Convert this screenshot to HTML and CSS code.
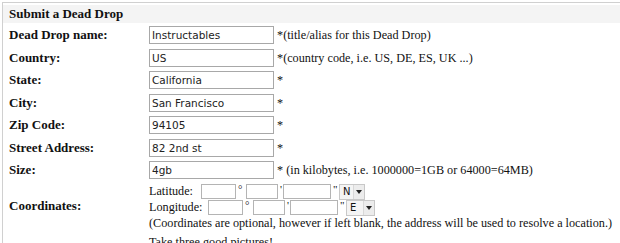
FILE: index.html
```html
<!DOCTYPE html>
<html>
<head>
<meta charset="utf-8">
<link rel="stylesheet" href="styles.css">
</head>
<body>
<div class="box">
  <div class="head">Submit a Dead Drop</div>
  <table class="form">
    <colgroup><col class="lcol"><col class="rcol"></colgroup>
    <tr><th>Dead Drop name:</th><td><input class="txt" value="Instructables"> <span class="note">*(title/alias for this Dead Drop)</span></td></tr>
    <tr><th>Country:</th><td><input class="txt" value="US"> <span class="note">*(country code, i.e. US, DE, ES, UK ...)</span></td></tr>
    <tr><th>State:</th><td><input class="txt" value="California"> <span class="note">*</span></td></tr>
    <tr><th>City:</th><td><input class="txt" value="San Francisco"> <span class="note">*</span></td></tr>
    <tr><th>Zip Code:</th><td><input class="txt" value="94105"> <span class="note">*</span></td></tr>
    <tr><th>Street Address:</th><td><input class="txt" value="82 2nd st"> <span class="note">*</span></td></tr>
    <tr><th>Size:</th><td><input class="txt" value="4gb"> <span class="note">* (in kilobytes, i.e. 1000000=1GB or 64000=64MB)</span></td></tr>
    <tr class="coords"><th>Coordinates:</th><td>
      <div class="crow"><span class="clab">Latitude:</span><input class="c c1"><span class="sym deg">°</span><input class="c c2"><span class="sym min">'</span><input class="c c3"><span class="sym sec">"</span><span class="sel s1"><b>N</b><i class="btn"><i class="arr"></i></i></span></div>
      <div class="crow"><span class="clab lon">Longitude:</span><input class="c c1"><span class="sym deg">°</span><input class="c c2"><span class="sym min">'</span><input class="c c3"><span class="sym sec">"</span><span class="sel s2"><b>E</b><i class="btn"><i class="arr"></i></i></span></div>
      <div class="cnote">(Coordinates are optional, however if left blank, the address will be used to resolve a location.)</div>
    </td></tr>
  </table>
  <div class="pics">Take three good pictures!</div>
</div>
</body>
</html>
```
FILE: styles.css
```css
html, body { margin: 0; padding: 0; background: #fff; }
body { font-family: "Liberation Serif", "DejaVu Serif", serif; font-size: 12.2px; color: #111; }
.box { margin: 2px 0 0 2px; border-top: 1px solid #d0d0d0; border-left: 1px solid #d0d0d0; padding-top: 2px; }
.head { background: #f4f4f4; font-weight: bold; font-size: 13px; padding: 0 6px; height: 18px; line-height: 18px; }
.form { border-collapse: collapse; margin-top: 1px; table-layout: fixed; width: 617px; }
.lcol { width: 146px; }
.form th { text-align: left; font-weight: bold; font-size: 13px; padding: 0 0 0 6px; height: 22.5px; vertical-align: middle; }
.form td { padding: 0; vertical-align: middle; height: 22.5px; white-space: nowrap; }
.txt { width: 119px; height: 14px; border: 1px solid #a8a8a8; padding: 1px 2px; font-family: "DejaVu Sans", sans-serif; font-size: 10.5px; color: #222; vertical-align: middle; margin: 0; }
.note { vertical-align: middle; }
.coords td { padding-top: 2px; }
.crow { display: flex; align-items: center; height: 16px; }
.clab { width: 52px; }
.clab.lon { width: 59px; }
.c { height: 13px; border: 1px solid #b4b4b4; padding: 0; margin: 0; }
.c1 { width: 33px; }
.c2 { width: 30px; }
.c3 { width: 46px; }
.sym { font-size: 11px; padding-left: 2px; box-sizing: border-box; line-height: 10px; align-self: flex-start; }
.deg { width: 10px; }
.min { width: 5px; }
.sec { width: 8px; }
.sel { display: flex; align-items: stretch; height: 14px; border: 1px solid #c8c8c8; background: #f4f4f4; font-family: "DejaVu Sans", sans-serif; font-size: 10px; }
.sel b { font-weight: normal; padding-left: 3px; line-height: 14px; flex: 1; }
.s1 { width: 24px; }
.s2 { width: 27px; }
.btn { display: flex; align-items: center; justify-content: center; width: 10px; border-left: 1px solid #d8d8d8; background: #ececec; }
.arr { width: 0; height: 0; border-left: 3px solid transparent; border-right: 3px solid transparent; border-top: 4px solid #222; }
.cnote { line-height: 16px; margin-top: -1px; }
.pics { padding-left: 146px; margin-top: 4px; }
```
